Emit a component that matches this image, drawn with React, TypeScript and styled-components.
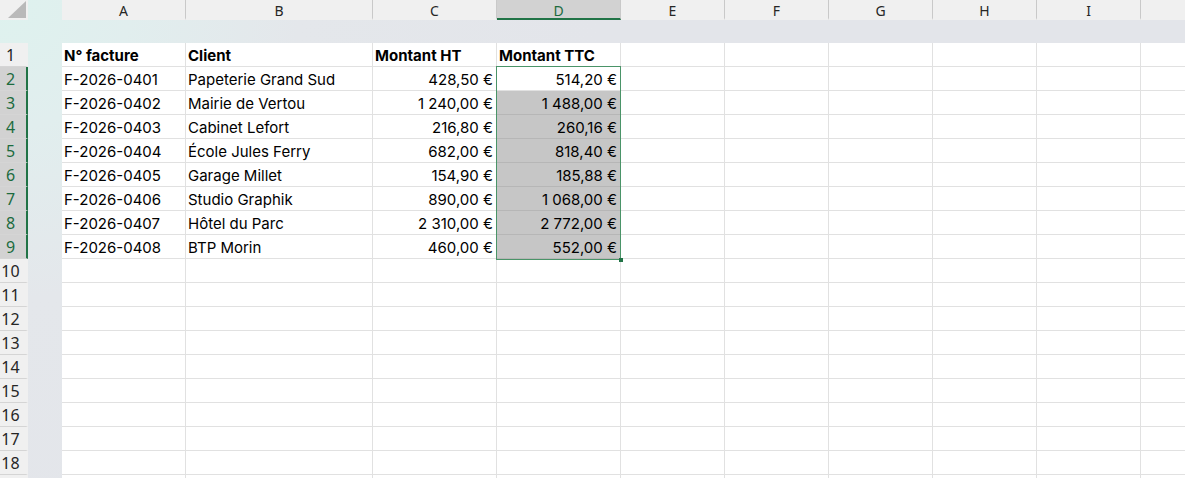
import styled, { createGlobalStyle } from "styled-components"

const GlobalStyle = createGlobalStyle`
  html, body {
    margin: 0;
    padding: 0;
    background: #ffffff;
    overflow: hidden;
  }
  body {
    font-family: Inter, "Liberation Sans", sans-serif;
  }
`

const COLUMNS = ["A", "B", "C", "D", "E", "F", "G", "H", "I", "J"]
const TOTAL_ROWS = 19
// grid tracks: 1 = row numbers, 2 = gutter, 3.. = columns A..J
// grid rows: 1 = column letters, 2 = band, 3.. = sheet rows 1..19
const FIRST_COL_TRACK = 3
const FIRST_ROW_TRACK = 3

type Invoice = { num: string; client: string; ht: string; ttc: string }

const invoices: Invoice[] = [
  { num: "F-2026-0401", client: "Papeterie Grand Sud", ht: "428,50\u00a0€", ttc: "514,20\u00a0€" },
  { num: "F-2026-0402", client: "Mairie de Vertou", ht: "1\u00a0240,00\u00a0€", ttc: "1\u00a0488,00\u00a0€" },
  { num: "F-2026-0403", client: "Cabinet Lefort", ht: "216,80\u00a0€", ttc: "260,16\u00a0€" },
  { num: "F-2026-0404", client: "École Jules Ferry", ht: "682,00\u00a0€", ttc: "818,40\u00a0€" },
  { num: "F-2026-0405", client: "Garage Millet", ht: "154,90\u00a0€", ttc: "185,88\u00a0€" },
  { num: "F-2026-0406", client: "Studio Graphik", ht: "890,00\u00a0€", ttc: "1\u00a0068,00\u00a0€" },
  { num: "F-2026-0407", client: "Hôtel du Parc", ht: "2\u00a0310,00\u00a0€", ttc: "2\u00a0772,00\u00a0€" },
  { num: "F-2026-0408", client: "BTP Morin", ht: "460,00\u00a0€", ttc: "552,00\u00a0€" },
]

const headers = ["N° facture", "Client", "Montant HT", "Montant TTC"]

// the content for a row, one string per column A..J
const rowValues = (r: number): string[] => {
  if (r === 1) return [...headers, "", "", "", "", "", ""]
  const inv = invoices[r - 2]
  if (!inv) return COLUMNS.map(() => "")
  return [inv.num, inv.client, inv.ht, inv.ttc, "", "", "", "", "", ""]
}

const isSelRow = (r: number) => r >= 2 && r <= 9

const App = () => {
  const rows = Array.from({ length: TOTAL_ROWS }, (_, i) => i + 1)

  return (
    <>
      <GlobalStyle />
      <Sheet>
        <Corner>
          <svg width="28" height="20" viewBox="0 0 28 20">
            <polygon points="26,1 26,18 8,18" fill="#b9b9b9" />
          </svg>
        </Corner>
        {COLUMNS.map((c, i) => (
          <ColHead key={c} $col={FIRST_COL_TRACK + i} $selected={c === "D"}>
            {c}
          </ColHead>
        ))}

        {rows.map((r) => (
          <Row key={r} r={r} />
        ))}

        <Selection>
          <FillHandle />
        </Selection>
      </Sheet>
    </>
  )
}

const Row = ({ r }: { r: number }) => {
  const values = rowValues(r)
  const track = FIRST_ROW_TRACK + r - 1
  return (
    <>
      <RowHead $row={track} $selected={isSelRow(r)}>
        {r}
      </RowHead>
      {values.map((v, i) => {
        const numeric = r > 1 && (i === 2 || i === 3)
        const inSel = i === 3 && r >= 3 && r <= 9
        return (
          <Cell
            key={i}
            $row={track}
            $col={FIRST_COL_TRACK + i}
            $bold={r === 1}
            $right={numeric}
            $selected={inSel}
          >
            {v}
          </Cell>
        )
      })}
    </>
  )
}

export default App

const Sheet = styled.div`
  display: grid;
  grid-template-columns: 28px 34px 124px 187px 124px 124px repeat(6, 104px);
  grid-template-rows: 20px 23px repeat(${TOTAL_ROWS}, 24px);
  width: 1185px;
  height: 478px;
  overflow: hidden;
  background: radial-gradient(
    circle at 0 0,
    #def2ee 0px,
    #e1eeee 130px,
    #e4e7eb 300px,
    #e3e5ea 600px
  );
`

const Corner = styled.div`
  grid-row: 1;
  grid-column: 1;
  background: #f0f0f0;
  svg {
    display: block;
  }
`

const ColHead = styled.div<{ $col: number; $selected?: boolean }>`
  grid-row: 1;
  grid-column: ${(p) => p.$col};
  display: flex;
  align-items: center;
  justify-content: center;
  box-sizing: border-box;
  background: ${(p) => (p.$selected ? "#d2d2d2" : "#f0f0f0")};
  border-right: 1px solid #c9c9c9;
  border-bottom: 2px solid ${(p) => (p.$selected ? "#217346" : "transparent")};
  padding-top: 2px;
  font-family: "Noto Sans", "Open Sans", sans-serif;
  font-size: 14px;
  color: ${(p) => (p.$selected ? "#1c6b3e" : "#262626")};
`

const RowHead = styled.div<{ $row: number; $selected?: boolean }>`
  grid-row: ${(p) => p.$row};
  grid-column: 1;
  display: flex;
  align-items: center;
  justify-content: center;
  box-sizing: border-box;
  padding-right: 5px;
  background: ${(p) => (p.$selected ? "#d2d2d2" : "#f0f0f0")};
  border-bottom: 1px solid #d5d5d5;
  border-right: 2px solid ${(p) => (p.$selected ? "#217346" : "transparent")};
  font-family: "Noto Sans", "Open Sans", sans-serif;
  font-size: 16px;
  color: ${(p) => (p.$selected ? "#1c6b3e" : "#262626")};
`

const Cell = styled.div<{
  $row: number
  $col: number
  $bold?: boolean
  $right?: boolean
  $selected?: boolean
}>`
  grid-row: ${(p) => p.$row};
  grid-column: ${(p) => p.$col};
  box-sizing: border-box;
  padding: 3px 3px 0 2px;
  line-height: 20px;
  white-space: nowrap;
  overflow: hidden;
  background: ${(p) => (p.$selected ? "#c6c6c6" : "#ffffff")};
  border-right: 1px solid ${(p) => (p.$selected ? "#b6b6b6" : "#e1e1e1")};
  border-bottom: 1px solid ${(p) => (p.$selected ? "#b6b6b6" : "#e1e1e1")};
  font-size: 15px;
  font-weight: ${(p) => (p.$bold ? 700 : 400)};
  text-align: ${(p) => (p.$right ? "right" : "left")};
  color: #000000;
`

const Selection = styled.div`
  grid-column: 6;
  grid-row: 4 / 12;
  margin: -1px 0 -1px -1px;
  position: relative;
  z-index: 2;
  box-sizing: border-box;
  border: 1px solid #4a9468;
  pointer-events: none;
`

const FillHandle = styled.div`
  position: absolute;
  right: -3px;
  bottom: -3px;
  width: 4px;
  height: 4px;
  background: #217346;
`
